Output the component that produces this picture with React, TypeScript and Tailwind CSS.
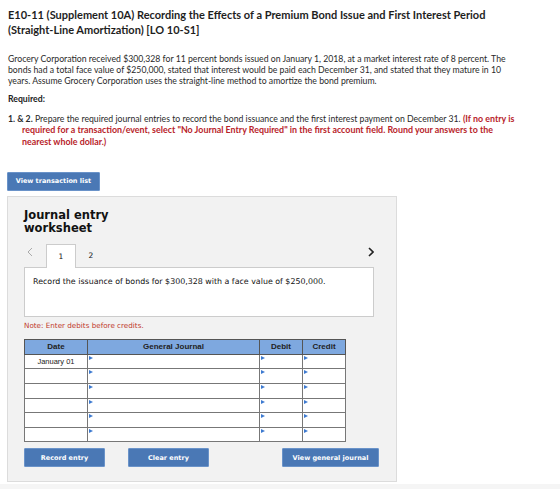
import React from 'react'

const rows = ['January 01', '', '', '', '', '']

function Marker() {
  return <span className="absolute left-[1px] top-[1px] w-0 h-0 border-y-[2.5px] border-y-transparent border-l-[4px] border-l-[#3d7ad0]" />
}

function BlueButton({ label, className }: { label: string; className: string }) {
  return (
    <button className={`${className} h-[19px] bg-[#4a78b5] border border-[#6a93c9] rounded-[1px] text-white text-[6.5px] font-bold font-['DejaVu_Sans',sans-serif] leading-none`}>
      {label}
    </button>
  )
}

function Chevron({ dir, className }: { dir: 'left' | 'right'; className: string }) {
  return (
    <svg width="6" height="10" viewBox="0 0 6 10" className={className}>
      <path
        d={dir === 'left' ? 'M5 1 L1 5 L5 9' : 'M1 1 L5 5 L1 9'}
        fill="none"
        stroke="currentColor"
        strokeWidth={dir === 'left' ? 1 : 1.6}
      />
    </svg>
  )
}

export default function App() {
  return (
    <div className="w-[560px] h-[489px] bg-white overflow-hidden font-['Lato',sans-serif] text-[#222]">
      <div className="px-2 pt-[7px]">
        <h1 className="text-[11px] font-bold leading-[15px] text-[#1e1e1e]">
          <span className="block whitespace-nowrap">E10-11 (Supplement 10A) Recording the Effects of a Premium Bond Issue and First Interest Period</span>
          <span className="block whitespace-nowrap">(Straight-Line Amortization) [LO 10-S1]</span>
        </h1>

        <div className="mt-[16px] text-[8.7px] leading-[11px] text-[#2a2a2a]">
          <span className="block whitespace-nowrap">Grocery Corporation received $300,328 for 11 percent bonds issued on January 1, 2018, at a market interest rate of 8 percent. The</span>
          <span className="block whitespace-nowrap">bonds had a total face value of $250,000, stated that interest would be paid each December 31, and stated that they mature in 10</span>
          <span className="block whitespace-nowrap">years. Assume Grocery Corporation uses the straight-line method to amortize the bond premium.</span>
        </div>

        <p className="mt-[7px] text-[8.7px] leading-[11px] font-bold">Required:</p>

        <div className="mt-[9px] text-[8.7px] leading-[11.4px] text-[#2a2a2a]">
          <span className="block whitespace-nowrap">
            <span className="font-bold">1. &amp; 2.</span> Prepare the required journal entries to record the bond issuance and the first interest payment on December 31.{' '}
            <span className="font-bold text-[8.9px] text-[#b8232a]">(If no entry is</span>
          </span>
          <span className="block whitespace-nowrap pl-[14px] font-bold text-[8.9px] text-[#b8232a]">
            required for a transaction/event, select "No Journal Entry Required" in the first account field. Round your answers to the
          </span>
          <span className="block whitespace-nowrap pl-[14px] font-bold text-[8.9px] text-[#b8232a]">nearest whole dollar.)</span>
        </div>

        <BlueButton label="View transaction list" className="block mt-[25px] -ml-[1px] w-[93px]" />
      </div>

      {/* worksheet panel */}
      <div className="mt-[5px] ml-[7px] w-[390px] h-[286px] bg-[#f2f2f2] border border-[#dcdcdc] px-4 pt-[12px] font-['DejaVu_Sans',sans-serif]">
        <h2 className="text-[11.5px] font-bold leading-[12.5px] text-[#111]">
          Journal entry
          <br />
          worksheet
        </h2>

        <div className="mt-[10px] flex items-end h-[23px]">
          <Chevron dir="left" className="ml-[3px] mb-[10px] text-[#aaa]" />
          <div className="ml-[13px] w-[30px] h-[24px] bg-white border border-b-0 border-[#ccc] -mb-[1px] relative z-10 flex items-center justify-center text-[7.5px] text-[#111]">
            1
          </div>
          <div className="w-[30px] h-[23px] flex items-center justify-center text-[7.5px] text-[#111]">2</div>
          <Chevron dir="right" className="ml-auto mr-[6px] mb-[10px] text-[#222]" />
        </div>

        <div className="w-[350px] h-[50px] bg-white border border-[#ccc] px-[8px] pt-[8px] text-[7.9px] text-[#111]">
          Record the issuance of bonds for $300,328 with a face value of $250,000.
        </div>

        <p className="mt-[4px] text-[7.2px] leading-[10px] text-[#c0392b]">Note: Enter debits before credits.</p>

        <table className="mt-[8px] border-collapse font-['Liberation_Sans',sans-serif] text-[7.5px]">
          <thead>
            <tr className="bg-[#7ea8df] h-[14.6px] text-[8px]">
              <th className="w-[63px] border border-[#555] font-bold text-[#222] p-0">Date</th>
              <th className="w-[172px] border border-[#555] font-bold text-[#222] p-0">General Journal</th>
              <th className="w-[43px] border border-[#555] font-bold text-[#222] p-0">Debit</th>
              <th className="w-[43px] border border-[#555] font-bold text-[#222] p-0">Credit</th>
            </tr>
          </thead>
          <tbody>
            {rows.map((d, i) => (
              <tr key={i} className="h-[14.6px] bg-white">
                <td className="border border-[#777] text-center text-[#222] p-0">{d}</td>
                <td className="border border-[#777] relative p-0"><Marker /></td>
                <td className="border border-[#777] relative p-0"><Marker /></td>
                <td className="border border-[#777] relative p-0"><Marker /></td>
              </tr>
            ))}
          </tbody>
        </table>

        <div className="mt-[6px] flex items-start">
          <BlueButton label="Record entry" className="w-[81px]" />
          <BlueButton label="Clear entry" className="ml-[23px] w-[81px]" />
          <BlueButton label="View general journal" className="ml-[73px] w-[97px]" />
        </div>
      </div>

      <div className="mt-[2px] h-[6px] bg-[#f5f5f5]" />
    </div>
  )
}
